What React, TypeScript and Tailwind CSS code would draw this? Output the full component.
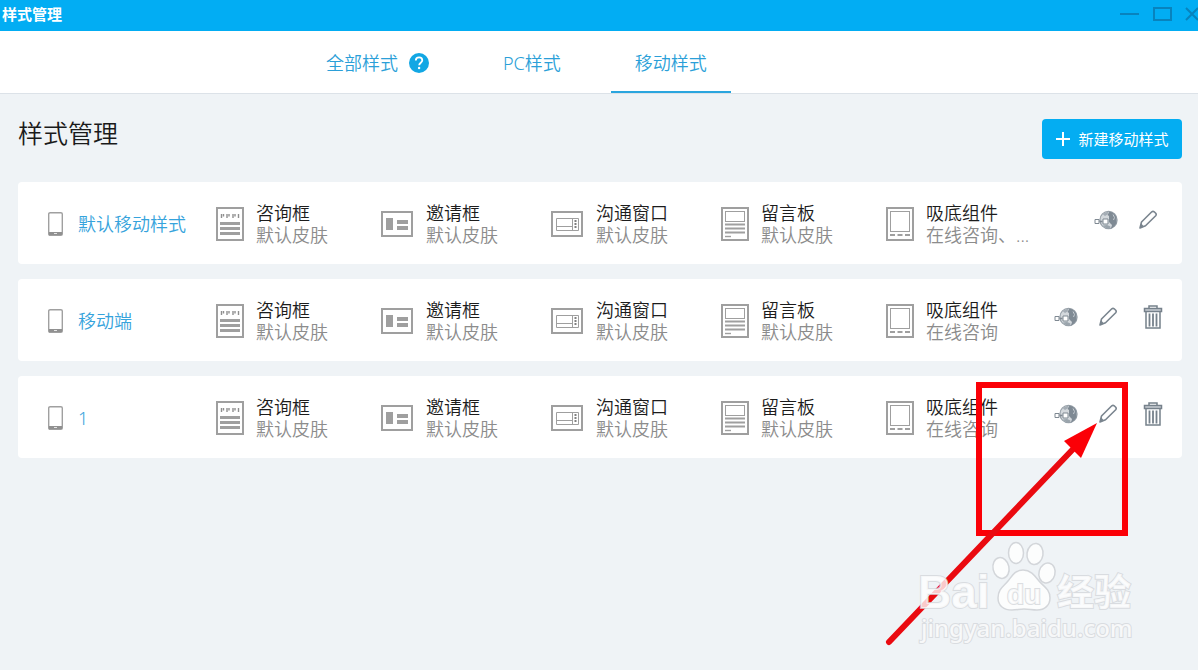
import type { ReactNode } from 'react'

type StyleRow = {
  id: string
  name: string
  bottom: string
  removable: boolean
}

const ROWS: StyleRow[] = [
  { id: 'default', name: '默认移动样式', bottom: '在线咨询、...', removable: false },
  { id: 'mobile', name: '移动端', bottom: '在线咨询', removable: true },
  { id: 'one', name: '1', bottom: '在线咨询', removable: true },
]

function WindowButtons() {
  return (
    <div className="-mr-1.5 flex shrink-0 items-center gap-3 text-[#0883bd]">
      <button type="button" aria-label="最小化" className="flex h-5 w-5 items-center justify-center">
        <svg width="20" height="16" viewBox="0 0 20 16" fill="none" stroke="currentColor" strokeWidth="2">
          <path d="M0 8h19" />
        </svg>
      </button>
      <button type="button" aria-label="最大化" className="flex h-5 w-5 items-center justify-center">
        <svg width="20" height="16" viewBox="0 0 20 16" fill="none" stroke="currentColor" strokeWidth="2">
          <rect x="2" y="2" width="17" height="12" />
        </svg>
      </button>
      <button type="button" aria-label="关闭" className="flex h-5 w-5 items-center justify-center">
        <svg width="20" height="16" viewBox="0 0 20 16" fill="none" stroke="currentColor" strokeWidth="2">
          <path d="M2 2l12 12M14 2L2 14" />
        </svg>
      </button>
    </div>
  )
}

function HelpIcon() {
  return (
    <svg width="20" height="20" viewBox="0 0 20 20" fill="none" aria-hidden>
      <circle cx="10" cy="10" r="10" fill="#12a7e4" />
      <path
        d="M6.8 7.6c0-2 1.4-3.2 3.3-3.2s3.2 1.2 3.2 2.9c0 2.4-3.1 2.5-3.1 5"
        stroke="#fff"
        strokeWidth="1.8"
      />
      <circle cx="10.1" cy="15" r="1.2" fill="#fff" />
    </svg>
  )
}

function PhoneIcon() {
  return (
    <svg width="15" height="24" viewBox="0 0 15 24" fill="none" className="shrink-0" aria-hidden>
      <rect x="0.7" y="0.7" width="13.6" height="22.6" rx="1.4" stroke="#a0a0a0" strokeWidth="1.4" />
      <path d="M1 20h13v3H1z" fill="#909090" />
      <path d="M6 21.5h3" stroke="#e4e4e4" />
    </svg>
  )
}

function ConsultIcon() {
  return (
    <svg width="28" height="34" viewBox="0 0 28 34" fill="none" aria-hidden>
      <rect x="1" y="1" width="26" height="32" stroke="#9f9f9f" strokeWidth="2" />
      <path
        d="M5.500 7v4M7.500 7v2.500M11 7v4M13 7v2.500M17 7v4M19 7v2.500M22.500 7v4"
        stroke="#8f8f8f"
        strokeWidth="1.400"
      />
      <path d="M4 16.500h20M4 21.500h20M4 26.500h20" stroke="#9f9f9f" strokeWidth="3" />
    </svg>
  )
}

function InviteIcon() {
  return (
    <svg width="32" height="26" viewBox="0 0 32 26" fill="none" aria-hidden>
      <rect x="1" y="1" width="30" height="24" stroke="#9f9f9f" strokeWidth="2" />
      <path d="M5 7h7v12H5zM16 9h11v4H16zM16 15h11v4H16z" fill="#9f9f9f" />
    </svg>
  )
}

function ChatWindowIcon() {
  return (
    <svg width="32" height="26" viewBox="0 0 32 26" fill="none" aria-hidden>
      <rect x="1" y="1" width="30" height="24" stroke="#9f9f9f" strokeWidth="2" />
      <path d="M5.500 7.500h22v12h-22zM5.500 15.500h16M21.500 7.500v12" stroke="#9f9f9f" />
      <path d="M24.500 9v2M24.500 12v2M24.500 15v2" stroke="#808080" strokeWidth="2" />
    </svg>
  )
}

function MessageIcon() {
  return (
    <svg width="28" height="34" viewBox="0 0 28 34" fill="none" aria-hidden>
      <rect x="1" y="1" width="26" height="32" stroke="#9f9f9f" strokeWidth="2" />
      <rect x="4.500" y="4.500" width="19" height="10" stroke="#9f9f9f" />
      <path d="M4 17.500h20M4 21.500h20M4 25.500h20" stroke="#9f9f9f" strokeWidth="1.800" />
      <path d="M4 29.500h6" stroke="#9f9f9f" strokeWidth="1.400" />
    </svg>
  )
}

function BottomIcon() {
  return (
    <svg width="28" height="34" viewBox="0 0 28 34" fill="none" aria-hidden>
      <rect x="1" y="1" width="26" height="32" stroke="#9f9f9f" strokeWidth="2" />
      <rect x="4.500" y="4.500" width="19" height="20" stroke="#9f9f9f" />
      <path d="M4 28h5M11.500 28h5M19 28h5" stroke="#9f9f9f" strokeWidth="2" />
    </svg>
  )
}

function GlobeLinkIcon() {
  return (
    <svg width="24" height="20" viewBox="0 0 24 20" fill="none" aria-hidden>
      <circle cx="14.500" cy="10" r="8.600" fill="#d3d8dc" stroke="#98a1a9" strokeWidth="1.200" />
      <path d="M9 4.500c1.500-1.800 3.500-2.600 5.500-2.700l-1 2.700-2.500 1.500z" fill="#a3acb4" />
      <path
        d="M15.500 1.500c3.500.5 6 2.800 7 6v5c-1 3-3 5-5.500 6l1-3.500-3-3V6l-1.500-1z"
        fill="#7f8a94"
      />
      <path d="M9 15.500c2 2.500 4 3 6.500 3l1-2-3.500-1.500z" fill="#9aa4ac" />
      <path d="M19 4.500l1.500 3-1 2.500" stroke="#c4cbd1" />
      <path d="M1 9.500h4v4H1zM9 9h5v5H9z" fill="#fff" stroke="#7f8992" />
      <path d="M5.500 11.500h3" stroke="#7f8992" strokeWidth="1.600" />
    </svg>
  )
}

function PencilIcon() {
  return (
    <svg width="20" height="20" viewBox="0 0 20 20" fill="none" stroke="#7a858f" strokeWidth="1.600" aria-hidden>
      <path d="M2 18l1.500-6L13.800 1.800q1.200-1 2.400 0l1.500 1.500q1 1.200 0 2.400L7.500 15.800z" strokeLinejoin="round" />
      <path d="M2 18l1.200-4.500L6 16.500z" fill="#7a858f" stroke="none" />
    </svg>
  )
}

function TrashIcon() {
  return (
    <svg width="20" height="24" viewBox="0 0 20 24" fill="none" stroke="#76818b" strokeWidth="1.500" aria-hidden>
      <path d="M6 3V1h8v2" />
      <path d="M1.500 3.500h17v3h-17z" fill="#c9ced3" />
      <path d="M3 7v16h14V7" />
      <path d="M6.500 8.500v13M10 8.500v13M13.500 8.500v13" strokeWidth="1.800" />
    </svg>
  )
}

type PartProps = { icon: ReactNode; title: string; wide?: boolean; children: ReactNode }

function Part({ icon, title, wide, children }: PartProps) {
  return (
    <div className="flex min-w-0 items-center">
      <div className={wide ? 'w-[45px] shrink-0' : 'w-10 shrink-0'}>{icon}</div>
      <div className="min-w-0 whitespace-nowrap leading-[22px]">
        <p className="text-[#1c1c1c]">{title}</p>
        <p className="text-[#8c8c8c]">{children}</p>
      </div>
    </div>
  )
}

function Row({ row }: { row: StyleRow }) {
  return (
    <li className="grid h-[82px] grid-cols-[168fr_165fr_170fr_170fr_165fr_150fr_142fr] items-center rounded bg-white pl-[30px] pr-1 pt-px text-lg font-[350]">
      <a href="#" className="flex items-center gap-[15px] whitespace-nowrap text-[#36a3dc]">
        <PhoneIcon />
        {row.name}
      </a>
      <Part icon={<ConsultIcon />} title="咨询框">默认皮肤</Part>
      <Part icon={<InviteIcon />} title="邀请框" wide>默认皮肤</Part>
      <Part icon={<ChatWindowIcon />} title="沟通窗口" wide>默认皮肤</Part>
      <Part icon={<MessageIcon />} title="留言板">默认皮肤</Part>
      <Part icon={<BottomIcon />} title="吸底组件">{row.bottom}</Part>
      <div className={row.removable ? 'flex justify-end pb-2' : 'flex justify-end pb-2 pr-[10px]'}>
        <button type="button" aria-label="链接" className="flex h-8 w-11 items-center justify-center">
          <GlobeLinkIcon />
        </button>
        <button type="button" aria-label="编辑" className="flex h-8 w-10 items-center justify-center">
          <PencilIcon />
        </button>
        {row.removable && (
          <button type="button" aria-label="删除" className="flex h-8 w-[50px] items-center justify-center">
            <TrashIcon />
          </button>
        )}
      </div>
    </li>
  )
}

// Red frame and arrow pointing at the edit button, with the site mark over them
function Annotation() {
  return (
    <svg
      width="270"
      height="280"
      viewBox="880 376 270 280"
      fill="none"
      className="pointer-events-none absolute left-[880px] top-[376px]"
    >
      <rect x="979" y="385" width="146" height="148" stroke="#fb0007" strokeWidth="6" />
      <path d="M889 642L1076 446" stroke="#ea0a10" strokeWidth="6" strokeLinecap="round" />
      <path d="M1097 423L1064 441L1081 458z" fill="#fb0007" />
      <g fill="#fff" fillOpacity="0.8" stroke="#d3d6da" strokeWidth="1.500">
        <ellipse cx="1001" cy="568" rx="8" ry="10.500" transform="rotate(-12 1001 568)" />
        <ellipse cx="1016" cy="553" rx="7.500" ry="10.500" />
        <ellipse cx="1035" cy="554" rx="8" ry="10.500" transform="rotate(8 1035 554)" />
        <ellipse cx="1047" cy="573" rx="8" ry="10" transform="rotate(15 1047 573)" />
        <path d="M1023 570c-8 0-11 6-15 11s-10 8-10 17c0 8 6 12 14 12 5 0 7-1 12-1s8 1 13 1c8 0 13-5 13-12 0-9-7-12-11-17s-8-11-16-11z" />
      </g>
      <g fill="#fff" fillOpacity="0.8" stroke="#d3d6da" strokeOpacity="0.8" strokeWidth="2" paintOrder="stroke">
        <text x="918" y="608" fontSize="46" fontWeight="700" fontFamily="Liberation Sans, sans-serif">Bai</text>
        <text x="1007" y="604" fontSize="28" fontWeight="700" fontFamily="Liberation Sans, sans-serif">du</text>
        <text x="1057" y="606" fontSize="37" fontWeight="700" fontFamily="Noto Sans CJK SC, sans-serif">经验</text>
        <text x="921" y="637" fontSize="24" fontWeight="500" fontFamily="Noto Sans, sans-serif">jingyan.baidu.com</text>
      </g>
    </svg>
  )
}

export default function App() {
  return (
    <div className="relative min-h-screen overflow-hidden bg-[#eff3f6] font-['Noto_Sans','Noto_Sans_CJK_SC',sans-serif]">
      <header className="flex h-[31px] items-center justify-between overflow-hidden bg-[#02adf3] pb-1 pl-0.5">
        <p className="text-[15px] font-bold leading-5 text-white">样式管理</p>
        <WindowButtons />
      </header>

      <nav className="flex h-[63px] gap-[26px] border-b border-[#dce2e8] bg-white pl-[302px] text-lg font-[350] text-[#2b9fd8]">
        <div className="flex items-center gap-[11px] px-6 pt-0.5">
          <a href="#">全部样式</a>
          <button type="button" aria-label="帮助">
            <HelpIcon />
          </button>
        </div>
        <a href="#" className="flex items-center px-6 pt-0.5">PC样式</a>
        <a href="#" className="flex items-center border-b-2 border-[#2aa5de] px-6 pt-1" aria-current="page">
          移动样式
        </a>
      </nav>

      <main className="pl-[18px] pr-4 pt-[25px]">
        <div className="flex items-start justify-between">
          <h1 className="text-[25px] font-[350] leading-7 text-[#1a1a1a]">样式管理</h1>
          <button
            type="button"
            className="flex h-10 w-[140px] items-center justify-center gap-[7px] rounded bg-[#04adf2] text-[15px] text-white"
          >
            <svg width="16" height="16" viewBox="0 0 16 16" stroke="#fff" strokeWidth="2" aria-hidden>
              <path d="M8 1v14M1 8h14" />
            </svg>
            新建移动样式
          </button>
        </div>

        <ul className="mt-[23px] flex flex-col gap-[15px]">
          {ROWS.map((row) => (
            <Row key={row.id} row={row} />
          ))}
        </ul>
      </main>

      <Annotation />
    </div>
  )
}
